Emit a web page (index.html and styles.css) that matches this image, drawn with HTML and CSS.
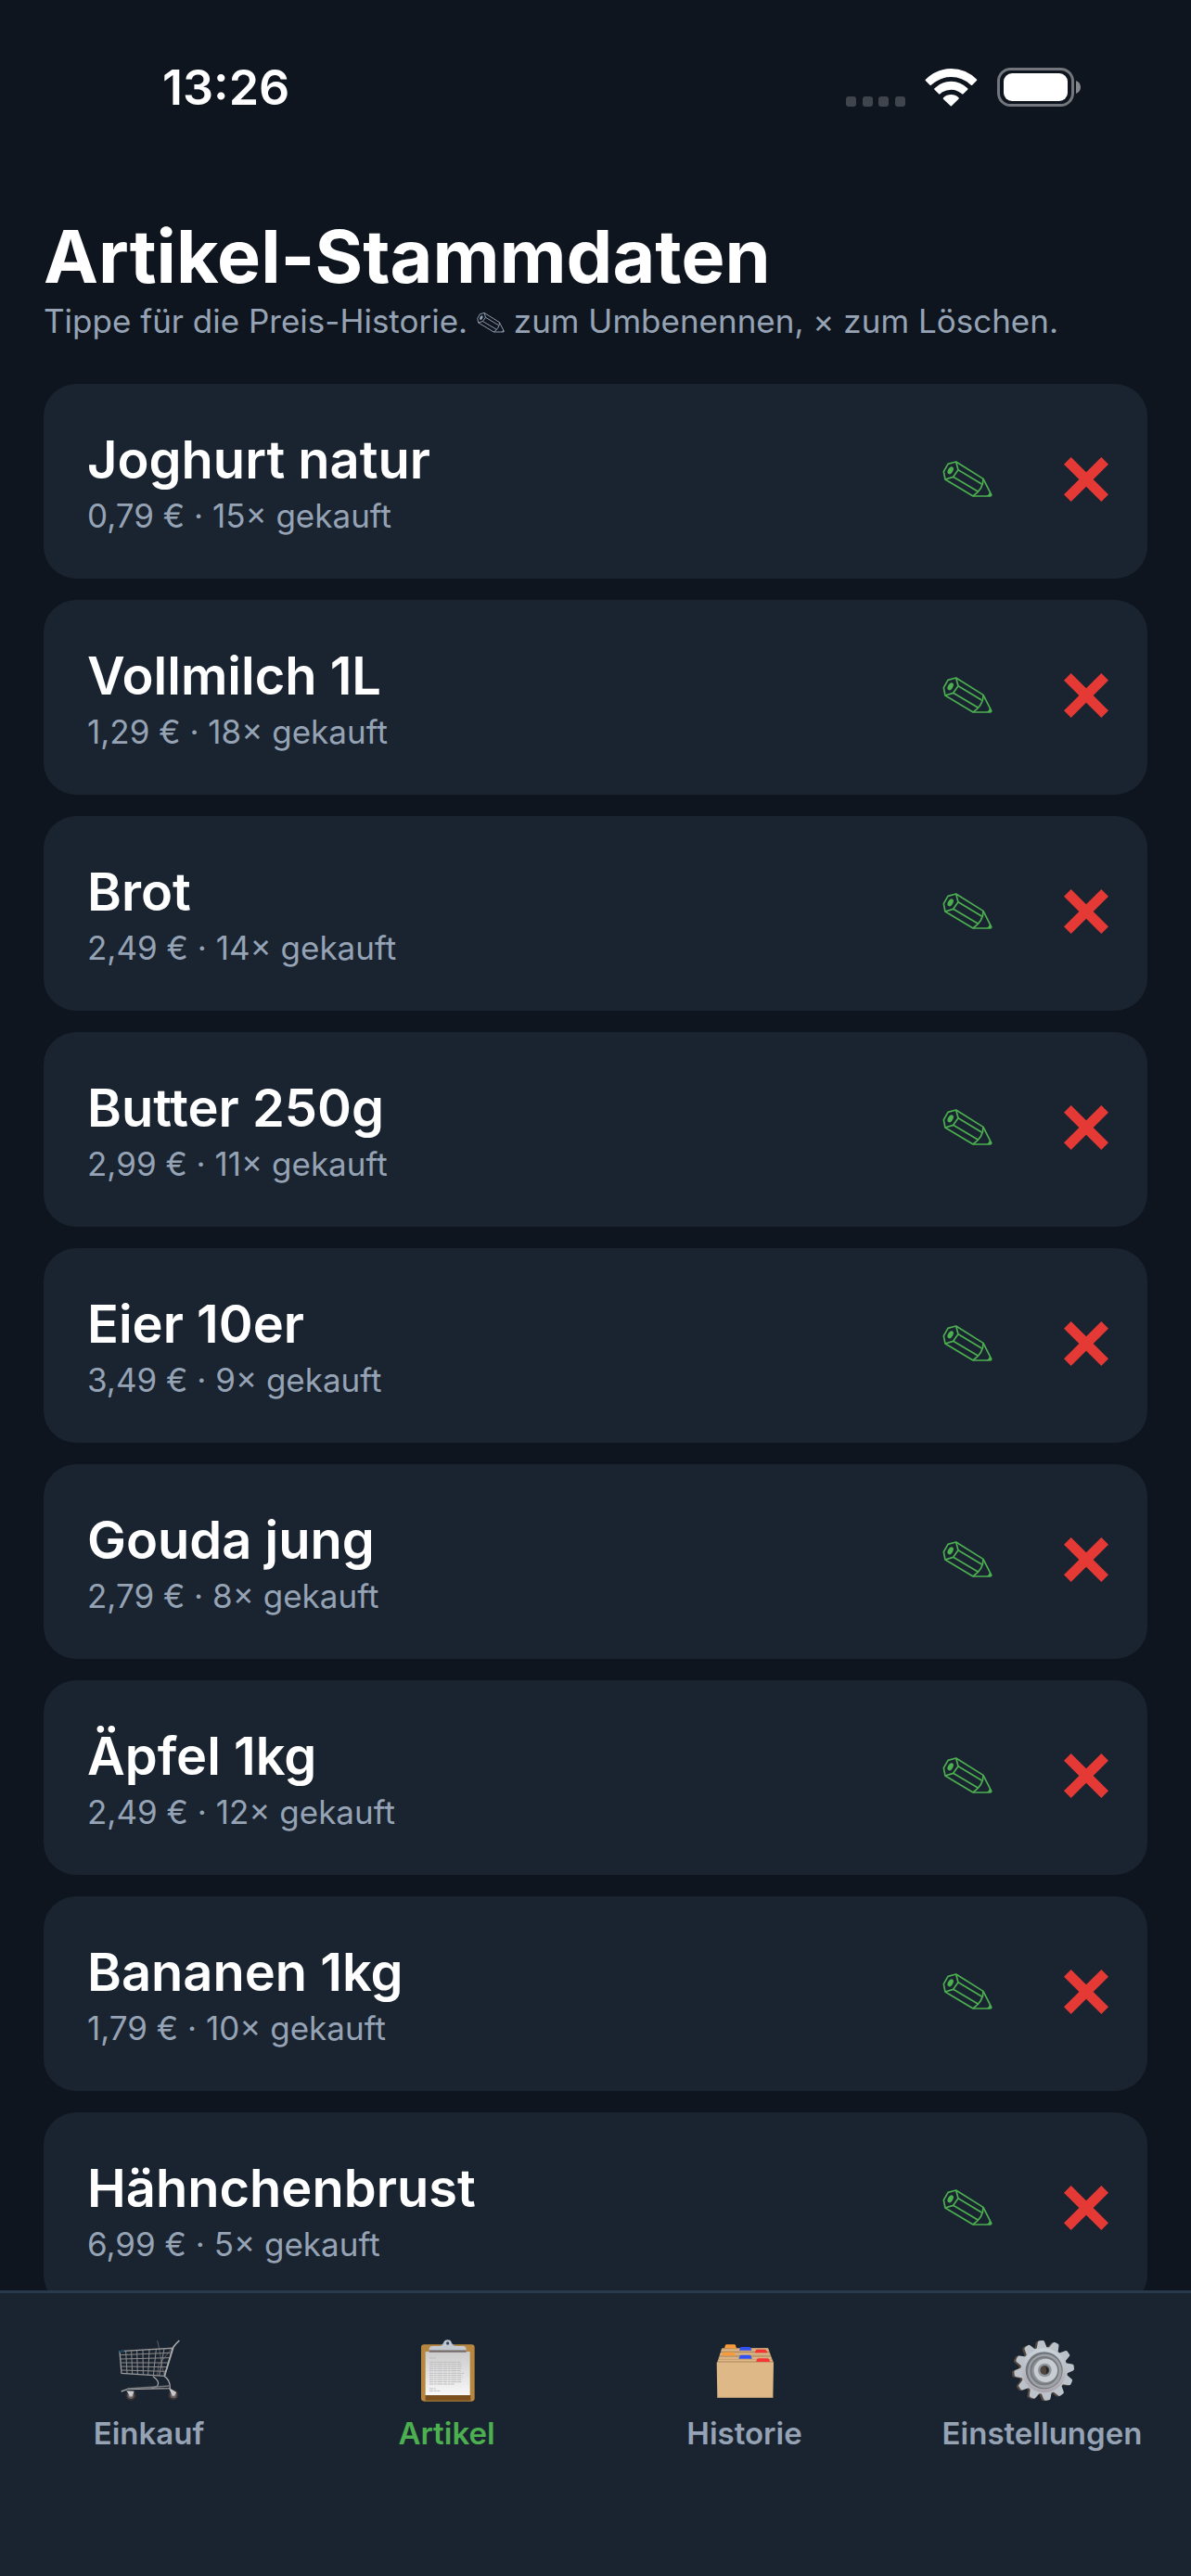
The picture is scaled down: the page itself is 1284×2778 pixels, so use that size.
FILE: index.html
```html
<!DOCTYPE html>
<html lang="de">

<head>
    <meta charset="UTF-8">
    <meta name="viewport" content="width=device-width, initial-scale=1.0">
    <title>Artikel-Stammdaten</title>

    <!-- CSS Styles -->
    <link rel="stylesheet" href="styles.css">
</head>

<body>
    <!-- Shared icons -->
    <svg class="icon-defs" aria-hidden="true">
        <symbol id="icon-pencil" viewBox="51 50 162 126">
            <g fill="none" stroke="currentColor" stroke-width="5" stroke-linejoin="round">
                <path d="M95 56 L183 111 L209 162 Q210 167 205 167 L150 167 L60 113 L55 88 L69 63 Z" />
                <path d="M95 56 L102 82 L86 105 L60 113" />
                <path d="M102 82 L178 128" />
                <path d="M86 105 L167 153" />
                <path d="M183 111 Q184 144 150 167" />
            </g>
            <ellipse cx="77" cy="84" rx="8" ry="13" transform="rotate(30 77 84)" fill="currentColor" />
            <path d="M204 153 L210 166 L194 167 Q203 162 204 153 Z" fill="currentColor" />
        </symbol>
        <symbol id="icon-cross" viewBox="0 0 144 144">
            <path d="M23 0 L72 49 L121 0 L144 23 L95 72 L144 121 L121 144 L72 95 L23 144 L0 121 L49 72 L0 23 Z" fill="currentColor" />
        </symbol>
    </svg>

    <!-- Status bar -->
    <div class="status-bar">
        <span class="time">13:26</span>
        <div class="status-icons">
            <svg class="signal" viewBox="0 0 64 11" aria-hidden="true">
                <rect x="0" width="11" height="11" rx="3" />
                <rect x="18" width="11" height="11" rx="3" />
                <rect x="35" width="11" height="11" rx="3" />
                <rect x="53" width="11" height="11" rx="3" />
            </svg>
            <svg class="wifi" viewBox="410 68 170 123" aria-hidden="true">
                <path d="M412 103 Q448 68 495 68 Q542 68 578 103 Q579 105 577 107 L563 121 Q561 123 559 121 Q531 95 495 95 Q459 95 430 121 Q428 123 426 121 L412 107 Q410 105 412 103 Z" />
                <path d="M441 132 Q464 109 495 109 Q525 109 548 132 Q550 134 548 136 L534 150 Q532 152 530 150 Q515 136 495 136 Q474 136 459 150 Q457 152 455 150 L441 136 Q439 134 441 132 Z" />
                <path d="M470 162 Q480 152 495 152 Q509 152 519 162 Q521 164 519 166 L496 189 Q494 190 493 189 L469 166 Q468 164 470 162 Z" />
            </svg>
            <svg class="battery" viewBox="0 0 90 42" aria-hidden="true">
                <rect class="battery-frame" x="1.5" y="1.5" width="80" height="39" rx="13" />
                <rect class="battery-fill" x="7" y="6" width="69" height="30" rx="9" />
                <path class="battery-tip" d="M85 14 Q90 16 90 21 Q90 26 85 28 Z" />
            </svg>
        </div>
    </div>

    <!-- Main content -->
    <main class="content">
        <h1>Artikel-Stammdaten</h1>
        <p class="hint">Tippe für die Preis-Historie. <svg class="hint-icon" role="img" aria-label="Stift"><use href="#icon-pencil" /></svg> zum Umbenennen, × zum Löschen.</p>

        <ul class="article-list">
            <li class="article">
                <div class="article-info">
                    <h2>Joghurt natur</h2>
                    <p>0,79 € · 15× gekauft</p>
                </div>
                <button class="btn-edit" type="button" aria-label="Umbenennen"><svg><use href="#icon-pencil" /></svg></button>
                <button class="btn-delete" type="button" aria-label="Löschen"><svg><use href="#icon-cross" /></svg></button>
            </li>
            <li class="article">
                <div class="article-info">
                    <h2>Vollmilch 1L</h2>
                    <p>1,29 € · 18× gekauft</p>
                </div>
                <button class="btn-edit" type="button" aria-label="Umbenennen"><svg><use href="#icon-pencil" /></svg></button>
                <button class="btn-delete" type="button" aria-label="Löschen"><svg><use href="#icon-cross" /></svg></button>
            </li>
            <li class="article">
                <div class="article-info">
                    <h2>Brot</h2>
                    <p>2,49 € · 14× gekauft</p>
                </div>
                <button class="btn-edit" type="button" aria-label="Umbenennen"><svg><use href="#icon-pencil" /></svg></button>
                <button class="btn-delete" type="button" aria-label="Löschen"><svg><use href="#icon-cross" /></svg></button>
            </li>
            <li class="article">
                <div class="article-info">
                    <h2>Butter 250g</h2>
                    <p>2,99 € · 11× gekauft</p>
                </div>
                <button class="btn-edit" type="button" aria-label="Umbenennen"><svg><use href="#icon-pencil" /></svg></button>
                <button class="btn-delete" type="button" aria-label="Löschen"><svg><use href="#icon-cross" /></svg></button>
            </li>
            <li class="article">
                <div class="article-info">
                    <h2>Eier 10er</h2>
                    <p>3,49 € · 9× gekauft</p>
                </div>
                <button class="btn-edit" type="button" aria-label="Umbenennen"><svg><use href="#icon-pencil" /></svg></button>
                <button class="btn-delete" type="button" aria-label="Löschen"><svg><use href="#icon-cross" /></svg></button>
            </li>
            <li class="article">
                <div class="article-info">
                    <h2>Gouda jung</h2>
                    <p>2,79 € · 8× gekauft</p>
                </div>
                <button class="btn-edit" type="button" aria-label="Umbenennen"><svg><use href="#icon-pencil" /></svg></button>
                <button class="btn-delete" type="button" aria-label="Löschen"><svg><use href="#icon-cross" /></svg></button>
            </li>
            <li class="article">
                <div class="article-info">
                    <h2>Äpfel 1kg</h2>
                    <p>2,49 € · 12× gekauft</p>
                </div>
                <button class="btn-edit" type="button" aria-label="Umbenennen"><svg><use href="#icon-pencil" /></svg></button>
                <button class="btn-delete" type="button" aria-label="Löschen"><svg><use href="#icon-cross" /></svg></button>
            </li>
            <li class="article">
                <div class="article-info">
                    <h2>Bananen 1kg</h2>
                    <p>1,79 € · 10× gekauft</p>
                </div>
                <button class="btn-edit" type="button" aria-label="Umbenennen"><svg><use href="#icon-pencil" /></svg></button>
                <button class="btn-delete" type="button" aria-label="Löschen"><svg><use href="#icon-cross" /></svg></button>
            </li>
            <li class="article">
                <div class="article-info">
                    <h2>Hähnchenbrust</h2>
                    <p>6,99 € · 5× gekauft</p>
                </div>
                <button class="btn-edit" type="button" aria-label="Umbenennen"><svg><use href="#icon-pencil" /></svg></button>
                <button class="btn-delete" type="button" aria-label="Löschen"><svg><use href="#icon-cross" /></svg></button>
            </li>
        </ul>
    </main>

    <!-- Tab bar -->
    <nav class="tab-bar">
        <a href="#einkauf" class="tab">
            <svg viewBox="74 60 216 216" aria-hidden="true">
                <g fill="none" stroke="#8d8b8c" stroke-width="3">
                    <path d="M208 73 L214 98 L224 160 L231 185" stroke="#5f6064" />
                    <path d="M256 97 L212 150 L208 184" stroke="#5f6064" />
                    <path d="M88 119 L250 112 M89 132 L247 128 M91 144 L243 144 M92 156 L240 158 M93 168 L236 172" />
                    <path d="M106 107 L110 180 M124 106 L127 181 M142 105 L144 182 M161 104 L162 183 M182 102 L178 184 M204 101 L195 185 M230 99 L214 186" />
                </g>
                <path d="M86 107 L257 97 L231 187 L92 178 Z" fill="none" stroke="#9b999a" stroke-width="4" />
                <path d="M231 187 L260 93 Q268 82 279 72" fill="none" stroke="#aaa9ab" stroke-width="5" />
                <path d="M85 108 L101 107" stroke="#164a62" stroke-width="6" />
                <g fill="none" stroke="#a5a4a7" stroke-width="4">
                    <path d="M194 188 Q219 206 207 220 L190 226" />
                    <path d="M231 188 Q250 200 249 227 L110 230 L91 237" />
                    <path d="M110 228 L249 219" stroke="#77787c" />
                </g>
                <circle cx="122" cy="250" r="14" fill="#666164" stroke="#35302f" stroke-width="6" />
                <circle cx="260" cy="248" r="14" fill="#666164" stroke="#35302f" stroke-width="6" />
                <circle cx="122" cy="250" r="5" fill="#aaa5a5" />
                <circle cx="260" cy="248" r="5" fill="#aaa5a5" />
                <path d="M108 235 L133 236 L127 251 L119 251 Z M246 229 L252 229 L270 240 L263 250 L256 250 Z" fill="#c9c8ca" />
            </svg>
            <span>Einkauf</span>
        </a>
        <a href="#artikel" class="tab active">
            <svg viewBox="46 60 216 216" aria-hidden="true">
                <defs>
                    <linearGradient id="paper" x1="0" y1="0" x2="0" y2="1">
                        <stop offset="0" stop-color="#cbcbcc" />
                        <stop offset="1" stop-color="#f8f8f8" />
                    </linearGradient>
                </defs>
                <rect x="70" y="85" width="173" height="184" rx="10" fill="#b8873f" />
                <path d="M84 249 H230 V266 H84 Z" fill="#7b4f1e" />
                <rect x="84" y="108" width="144" height="141" fill="url(#paper)" />
                <path d="M96 110 V98 Q97 90 108 90 H132 Q141 87 143 77 Q147 70 156 70 Q165 70 168 77 Q170 87 180 90 H205 Q216 91 216 100 V110 Z" fill="#c3c8d0" />
                <path d="M96 107 H216" stroke="#756b67" stroke-width="7" />
                <path d="M135 88 Q142 85 144 79 M177 88 Q169 85 167 79" fill="none" stroke="#7da4ca" stroke-width="3" />
                <circle cx="156" cy="81" r="5" fill="#35465a" />
                <g stroke="#bcbcbe" stroke-width="3" stroke-dasharray="13 2 8 2 18 2">
                    <path d="M97 129 H118 M97 142 H198 M97 149 H203 M97 156 H201 M97 163 H203 M97 170 H198 M97 178 H209 M97 185 H203 M97 192 H204 M97 199 H202 M97 206 H201 M97 213 H177 M97 228 H117 M97 235 H131" />
                </g>
            </svg>
            <span>Artikel</span>
        </a>
        <a href="#historie" class="tab">
            <svg viewBox="50 60 216 216" aria-hidden="true">
                <path d="M84 97 L233 96 L251 145 H68 Z" fill="#c9a274" />
                <path d="M92 97 L95 87 Q96 85 99 85 H124 Q127 85 128 88 L131 98 Z" fill="#fb9a38" />
                <path d="M82 103 H235 M78 116 H239 M75 129 H243 M72 137 H247" stroke="#dfb986" stroke-width="4" />
                <path d="M80 109 H237 M76 123 H241 M70 141 H249" stroke="#a98861" stroke-width="2" />
                <path d="M140 104 L143 95 Q144 93 147 93 H173 Q176 93 177 96 L180 104 Z" fill="#3350f1" />
                <path d="M190 112 L194 103 Q195 101 198 101 H223 Q226 101 227 104 L231 112 Z" fill="#f73333" />
                <path d="M83 121 L87 112 Q88 110 91 110 H121 Q124 110 125 113 L128 121 Z" fill="#fb9a38" />
                <path d="M138 131 L142 121 Q143 119 146 119 H174 Q177 119 178 122 L181 131 Z" fill="#3350f1" />
                <path d="M194 141 L198 132 Q199 130 202 130 H231 Q234 130 236 133 L240 141 Z" fill="#f73333" />
                <path d="M67 143 H251 L249 257 H69 Z" fill="#dfb887" />
                <path d="M69 256 H249" stroke="#b89871" stroke-width="3" />
            </svg>
            <span>Historie</span>
        </a>
        <a href="#einstellungen" class="tab">
            <svg viewBox="52 60 216 216" aria-hidden="true">
                <defs>
                    <linearGradient id="steel" x1="0" y1="0" x2="0" y2="1">
                        <stop offset="0" stop-color="#cbd3db" />
                        <stop offset="1" stop-color="#aaa5ad" />
                    </linearGradient>
                    <path id="tooth" d="M-18 -68 L-11 -92 Q-10 -97 -5 -97 H5 Q10 -97 11 -92 L18 -68 Z" />
                    <g id="teeth">
                        <use href="#tooth" transform="rotate(-6)" />
                        <use href="#tooth" transform="rotate(24)" />
                        <use href="#tooth" transform="rotate(54)" />
                        <use href="#tooth" transform="rotate(84)" />
                        <use href="#tooth" transform="rotate(114)" />
                        <use href="#tooth" transform="rotate(144)" />
                        <use href="#tooth" transform="rotate(174)" />
                        <use href="#tooth" transform="rotate(204)" />
                        <use href="#tooth" transform="rotate(234)" />
                        <use href="#tooth" transform="rotate(264)" />
                        <use href="#tooth" transform="rotate(294)" />
                        <use href="#tooth" transform="rotate(324)" />
                        <circle r="76" />
                    </g>
                </defs>
                <use href="#teeth" transform="translate(158 171)" fill="#54483f" />
                <use href="#teeth" transform="translate(165 169)" fill="#bcc2ca" />
                <circle cx="165" cy="169" r="72" fill="url(#steel)" />
                <circle cx="165" cy="169" r="60" fill="#71777c" />
                <circle cx="167" cy="171" r="55" fill="#9da2a6" />
                <circle cx="166" cy="170" r="47" fill="#777b80" />
                <circle cx="166" cy="170" r="41" fill="#8d9195" />
                <circle cx="170" cy="169" r="38" fill="#c8ccd3" />
                <circle cx="167" cy="168" r="22" fill="#8f959c" />
                <circle cx="167" cy="168" r="15" fill="#51443d" />
                <path d="M169 155 Q188 167 171 182 Q176 168 169 155 Z" fill="#1a2430" />
            </svg>
            <span>Einstellungen</span>
        </a>
    </nav>
</body>

</html>
```
FILE: styles.css
```css
/* Colors */
:root {
    --bg-color: #0f151e;
    --card-color: #1a2430;
    --line-color: #2a3a4d;
    --text-color: #ffffff;
    --muted-color: #95a3b5;
    --green: #4caf50;
    --red: #e53935;
}

* {
    box-sizing: border-box;
}

body {
    display: flex;
    flex-direction: column;
    height: 100vh;
    margin: 0;
    background: var(--bg-color);
    color: var(--text-color);
    font-family: Inter, "Liberation Sans", sans-serif;
}

h1, h2, p, ul {
    margin: 0;
    padding: 0;
}

.icon-defs {
    position: absolute;
    width: 0;
    height: 0;
}

/* Status bar */
.status-bar {
    display: flex;
    justify-content: space-between;
    align-items: center;
    flex-shrink: 0;
    height: 188px;
    padding: 0 119px 0 175px;
}

.time {
    font-size: 52px;
    font-weight: 600;
}

.status-icons {
    display: flex;
    align-items: flex-end;
    gap: 21px;
}

.signal {
    width: 64px;
    height: 11px;
    fill: #40454d;
}

.wifi {
    width: 57px;
    height: 41px;
    fill: #ffffff;
}

.battery {
    width: 90px;
    height: 42px;
}

.battery-frame {
    fill: none;
    stroke: #73777d;
    stroke-width: 3;
}

.battery-fill {
    fill: #ffffff;
}

.battery-tip {
    fill: #85888d;
}

/* Main content */
.content {
    flex: 1;
    min-height: 0;
    padding: 40px 47px 0;
    overflow: hidden;
}

h1 {
    font-size: 79px;
    font-weight: 700;
    line-height: 96px;
}

.hint {
    font-size: 35px;
    line-height: 44px;
    color: var(--muted-color);
}

.hint-icon {
    width: 30px;
    height: 24px;
    vertical-align: -1px;
}

/* Article cards */
.article-list {
    display: flex;
    flex-direction: column;
    gap: 23px;
    margin-top: 46px;
    list-style: none;
}

.article {
    display: flex;
    align-items: stretch;
    padding: 0 2px 0 47px;
    background: var(--card-color);
    border-radius: 35px;
}

.article-info {
    flex: 1;
    padding: 47px 0 43px;
}

.article-info h2 {
    font-size: 56px;
    font-weight: 600;
    line-height: 70px;
}

.article-info p {
    font-size: 35px;
    line-height: 50px;
    color: var(--muted-color);
}

.article button {
    display: flex;
    justify-content: center;
    align-items: center;
    width: 128px;
    padding: 0 0 4px;
    border: none;
    background: none;
    cursor: pointer;
}

.btn-edit {
    color: var(--green);
}

.btn-delete {
    color: var(--red);
}

.btn-edit svg {
    width: 54px;
    height: 42px;
}

.btn-delete svg {
    width: 48px;
    height: 48px;
}

/* Tab bar */
.tab-bar {
    display: grid;
    grid-template-columns: repeat(4, 1fr);
    flex-shrink: 0;
    padding: 47px 0 132px;
    background: var(--card-color);
    border-top: 3px solid var(--line-color);
}

.tab {
    display: flex;
    flex-direction: column;
    align-items: center;
    gap: 10px;
    color: var(--muted-color);
    font-size: 33px;
    font-weight: 600;
    line-height: 44px;
    text-decoration: none;
}

.tab svg {
    width: 72px;
    height: 72px;
}

.tab.active {
    color: var(--green);
}
```
